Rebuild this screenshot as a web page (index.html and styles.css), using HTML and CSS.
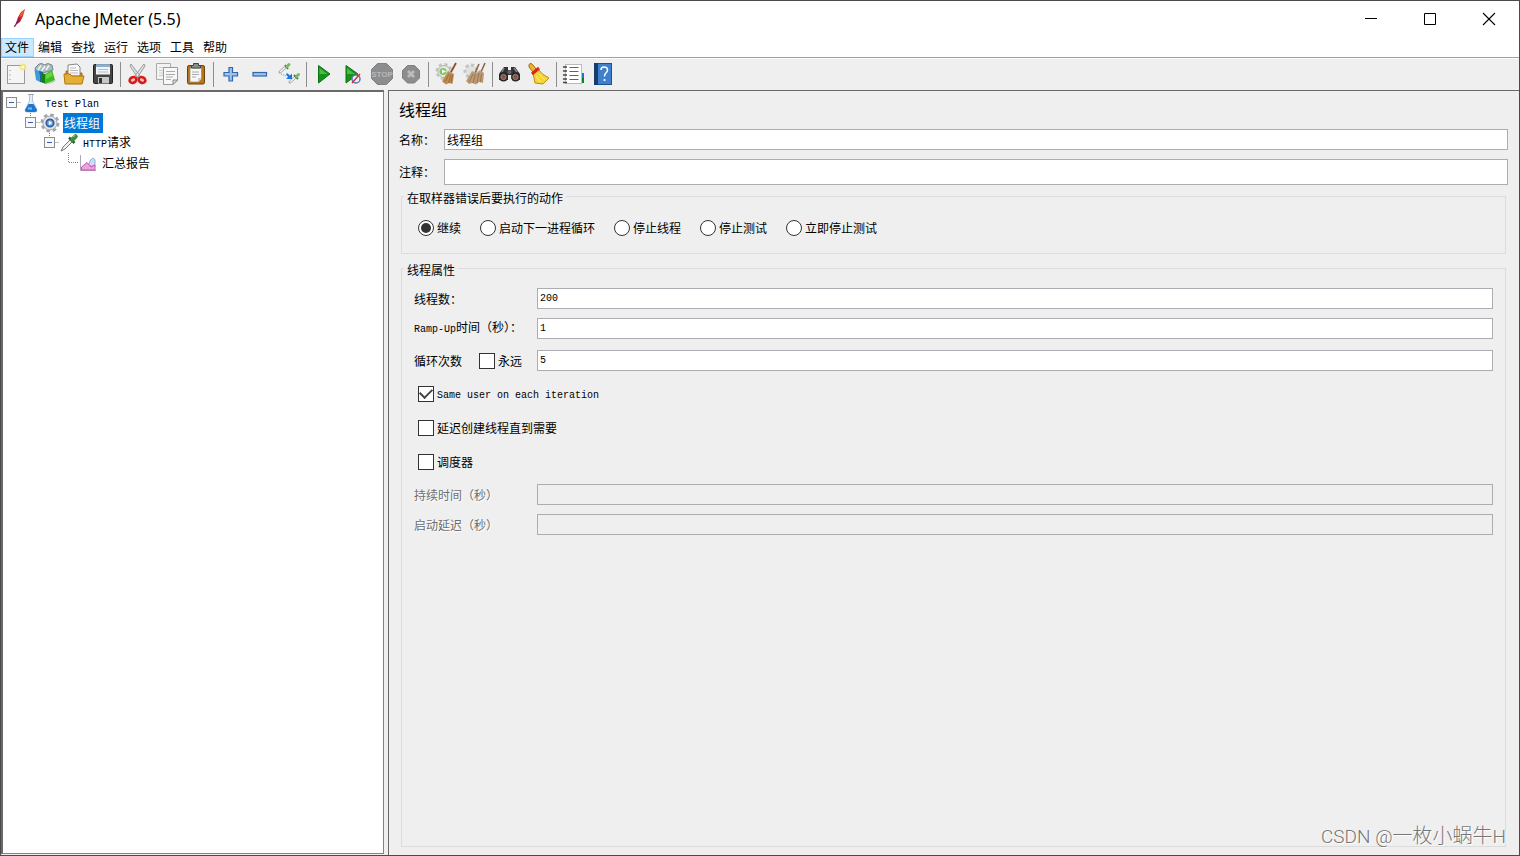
FILE: index.html
```html
<!DOCTYPE html>
<html lang="zh-CN">
<head>
<meta charset="utf-8">
<title>Apache JMeter (5.5)</title>
<link rel="stylesheet" href="styles.css">
</head>
<body>
<div class="window">
  <header class="titlebar">
    <svg class="app-icon" width="20" height="20" viewBox="0 0 20 20"><path d="M15 0 11 3 8 8 6 14 4 18 5 18 7 15 10 13 13 7Z" fill="#d2232a"/><path d="M15 0 12 3 9 8 12 7Z" fill="#f06a2a"/><path d="M9 9 6 14 7 15 10 12Z" fill="#8a2172"/><path d="M10 9 4 18" stroke="#5b2a6e" fill="none" stroke-width=".8"/></svg>
    <h1 class="title">Apache JMeter (5.5)</h1>
    <div class="window-buttons">
      <button aria-label="最小化"><svg width="14" height="14"><path d="M1 6.500H13" stroke="#000"/></svg></button>
      <button aria-label="最大化"><svg width="14" height="14"><path d="M1.500 1.500H12.500V12.500H1.500Z" stroke="#000" fill="none"/></svg></button>
      <button aria-label="关闭"><svg width="14" height="14"><path d="M1 1 13 13M13 1 1 13" stroke="#000" stroke-width="1.100"/></svg></button>
    </div>
  </header>
  <nav class="menubar">
    <button class="open">文件</button><button>编辑</button><button>查找</button><button>运行</button><button>选项</button><button>工具</button><button>帮助</button>
  </nav>
  <div class="toolbar" role="toolbar">
    <button aria-label="新建"><svg width="24" height="24" viewBox="0 0 24 24"><rect x="3.500" y="3.500" width="17" height="18" fill="#f5f5f5" stroke="#999" /><path d="M6 8v1M6 12.500v1M6 17v1" stroke="#aaa" stroke-width="1.500"/><circle cx="19" cy="5" r="3.500" fill="#f4e66a" opacity=".8"/><circle cx="19" cy="5" r="1.600" fill="#fffce0"/></svg></button>
    <button aria-label="模板"><svg width="24" height="24" viewBox="0 0 24 24"><path d="M2 6 6 2 9 1.500 11 3 15 1.500 19 3 20 8 10 11 3 9Z" fill="#aab9be" stroke="#75898f"/><path d="M5 8 8 3.500M8.500 9 12 4M13 8 16 3.500" fill="none" stroke="#eef3f4" stroke-width="1.600"/><path d="M1.500 7.500 6 9 7 20 3 18Z" fill="#3b9bd6"/><path d="M6 9 10 10 11 21 7 20Z" fill="#1768a5"/><path d="M18 20 23 18 21 20 13 23Z" fill="#bbb"/><path d="M12 12 19 8 22 18 12.500 22Z" fill="#3fba23"/><path d="M9 11 12 12 12.500 22 9 20Z" fill="#12820d"/><path d="M13 12.500 18.500 9.500 19.500 14 13 17Z" fill="#66d63f"/></svg></button>
    <button aria-label="打开"><svg width="24" height="24" viewBox="0 0 24 24"><path d="M4 20V9H8L10 11H20V20Z" fill="#c6881b" stroke="#a36a0a"/><path d="M6 14V3L15 2 18 5V14Z" fill="#fafafa" stroke="#888"/><path d="M8 6h6M8 8.500h8M8 11h8" stroke="#bbb"/><path d="M2 12H8L10 14H22L20 22H3Z" fill="#e5af35" stroke="#b27710"/></svg></button>
    <button aria-label="保存"><svg width="24" height="24" viewBox="0 0 24 24"><rect x="2.500" y="2.500" width="19" height="19" rx="1" fill="#454545" stroke="#222"/><rect x="5" y="2.500" width="14" height="10" fill="#f2f5f8"/><rect x="5" y="2.500" width="14" height="2.500" fill="#86b0d7"/><path d="M7 7.500h10M7 10h10" stroke="#bbb"/><rect x="7" y="15" width="11" height="6.500" fill="#c7c7c7"/><rect x="8" y="16" width="3" height="5" fill="#333"/></svg></button>
    <span class="separator"></span>
    <button aria-label="剪切"><svg width="24" height="24" viewBox="0 0 24 24"><path d="M5 2 4 4 12 16 15 15ZM18 2 19 4 11 16 8 15Z" fill="#e0e0e0" stroke="#888" stroke-width=".8"/><ellipse cx="7" cy="18" rx="3.500" ry="2.800" fill="#f3c8c8" stroke="#d81c1c" stroke-width="2.600" transform="rotate(-25 7 18)"/><ellipse cx="16" cy="18" rx="3.500" ry="2.800" fill="#f3c8c8" stroke="#d81c1c" stroke-width="2.600" transform="rotate(25 16 18)"/></svg></button>
    <button aria-label="复制"><svg width="24" height="24" viewBox="0 0 24 24"><path d="M1.500 1.500H15.500V17.500H1.500Z" fill="#f3f3f3" stroke="#aaa"/><path d="M4 5.500h8M4 8.500h5M4 11h4M4 13.500h4" stroke="#ccc"/><path d="M8.500 5.500H22.500V18L18 22.500H8.500Z" fill="#f8f8f8" stroke="#999"/><path d="M11 9.500h9M11 12.500h9M11 15h7M11 17.500h5" stroke="#aaa"/><path d="M22.500 18H18V22.500Z" fill="#ddd" stroke="#888"/></svg></button>
    <button aria-label="粘贴"><svg width="24" height="24" viewBox="0 0 24 24"><rect x="3.500" y="3.500" width="17" height="18.500" rx="1.500" fill="#b87518" stroke="#6e4307"/><path d="M6 6H17.500V17L14.500 20H6Z" fill="#f7f7f7" stroke="#888" stroke-width=".7"/><path d="M8 10h7M8 12.500h7M8 15h4" stroke="#aaa"/><path d="M17.500 16H14V20Z" fill="#ccc"/><path d="M7.500 6V3.500H9.500V1.500H14.500V3.500H16.500V6Z" fill="#888f86" stroke="#444"/></svg></button>
    <span class="separator"></span>
    <button aria-label="展开全部"><svg width="24" height="24" viewBox="0 0 24 24"><path d="M10 5.500h3.500v5h5v3.500h-5v5H10v-5H5v-3.500h5Z" fill="#9fc1e8" stroke="#3166a9" stroke-width="1.200"/></svg></button>
    <button aria-label="收起全部"><svg width="24" height="24" viewBox="0 0 24 24"><rect x="5" y="10.500" width="13.500" height="3.500" fill="#9fc1e8" stroke="#3166a9" stroke-width="1.200"/></svg></button>
    <button aria-label="切换"><svg width="24" height="24" viewBox="0 0 24 24"><path d="M3 10 8 5.500M13 20l5-4.500" stroke="#a3a9a3" stroke-width="3" stroke-linecap="round"/><path d="M3 10 8 5.500M13 20l5-4.500" stroke="#f4f4f4" stroke-width="1.400"/><path d="M8 3 11 7M17 13l4 4" stroke="#477a3d" stroke-width="1.800"/><path d="M10 4.500 12 2.500M19.500 14.500l2-2" stroke="#7fb573" stroke-width="3" stroke-linecap="round"/><path d="M4 12 9 14" stroke="#6a93d5" stroke-dasharray="1 1"/><path d="M10 11 13 13.500 15 11.500V17H9L11 15 9 12.500Z" fill="#1976e5"/></svg></button>
    <span class="separator"></span>
    <button aria-label="启动"><svg width="24" height="24" viewBox="0 0 24 24"><path d="M6.500 3.500 18 12 6.500 21Z" fill="#149318" stroke="#087411"/><path d="M7.500 6 15.500 12H7.500Z" fill="#4cba43"/></svg></button>
    <button aria-label="不停顿开始"><svg width="24" height="24" viewBox="0 0 24 24"><path d="M5 3.500 17 12 5 21Z" fill="#149318" stroke="#087411"/><path d="M6 6 14 12H6Z" fill="#4cba43"/><circle cx="15" cy="17" r="4" fill="#eef3fa" stroke="#5278b5" stroke-width="1.500"/><path d="M11 21 19 12" stroke="#e02520" stroke-width="1.400"/></svg></button>
    <button aria-label="停止" disabled><svg width="24" height="24" viewBox="0 0 24 24"><path d="M7.500 1.500H16.500L22.500 7.500V16.500L16.500 22.500H7.500L1.500 16.500V7.500Z" fill="#8d8d8d" stroke="#808080"/><text class="stop-text" x="12" y="15" text-anchor="middle">STOP</text></svg></button>
    <button aria-label="关闭测试" disabled><svg width="24" height="24" viewBox="0 0 24 24"><path d="M8.500 3.500H15.500L20.500 8.500V16L15.500 21H8.500L3.500 16V8.500Z" fill="#8d8d8d" stroke="#808080"/><path d="M9 9 15 15M15 9 9 15" stroke="#bcbcbc" stroke-width="2.800"/></svg></button>
    <span class="separator"></span>
    <button aria-label="清除"><svg width="24" height="24" viewBox="0 0 24 24"><circle cx="10" cy="9.500" r="7" fill="none" stroke="#c3c6c2" stroke-width="3" stroke-dasharray="3.200 2.300"/><circle cx="10" cy="9.500" r="6" fill="#e6e8e5" stroke="#b5b8b4"/><circle cx="9" cy="9.500" r="3.500" fill="#83c75c"/><path d="M8 7.500l4 2-4 2Z" fill="#fff"/><path d="M22 1 17 10" stroke="#8d5322" stroke-width="1.800"/><path d="M14 9 20 12 18.500 22 15 21 12 22.500 8 19.500Z" fill="#c08d55"/><path d="M15 12 11 20M17 13 14.500 21M18.500 13 17 21" stroke="#8f6232" stroke-width=".8"/></svg></button>
    <button aria-label="清除全部"><svg width="24" height="24" viewBox="0 0 24 24"><circle cx="8" cy="9" r="6" fill="#e2e3e1" stroke="#c3c6c2" stroke-width="3" stroke-dasharray="3.200 2.300"/><path d="M16 2 12 11M22 1 18 10" stroke="#87634a" stroke-width="1.500"/><path d="M9 9 14 11 17 8 21 11 20 21 16 20 13 22.500 9 21 6 22 3 19Z" fill="#bd9a74"/><path d="M10 12 6 20M12.500 12 10 21M16 11 14 21M18.500 12 17.500 20" stroke="#8c6c48" stroke-width=".8"/></svg></button>
    <span class="separator"></span>
    <button aria-label="搜索"><svg width="24" height="24" viewBox="0 0 24 24"><path d="M3 9 6 5H10V8H13V5H17L22 12V18H14V13H10V18H1V12Z" fill="#343434"/><path d="M6 6 4 10M16 6l3 4" stroke="#888" stroke-width="1.500"/><circle cx="5.500" cy="15" r="4.500" fill="#242424"/><circle cx="17.500" cy="15" r="4.500" fill="#242424"/><circle cx="5.500" cy="15" r="2.700" fill="#885342" stroke="#aaa" stroke-width=".6"/><circle cx="17.500" cy="15" r="2.700" fill="#885342" stroke="#aaa" stroke-width=".6"/><circle cx="11.500" cy="10" r="2" fill="#666"/></svg></button>
    <button aria-label="重置搜索"><svg width="24" height="24" viewBox="0 0 24 24"><path d="M2 2.500Q4 0 6 3L9 7 6 10 2 5Z" fill="#edb338" stroke="#a86a0c"/><path d="M6 11 11 7Q15 13 22 16L16 22 8 21Z" fill="#f4d33b" stroke="#bf8b12"/><path d="M9 14 13 20M12 12 18 18" stroke="#fff16e"/><path d="M5 12 12 6" stroke="#d82720" stroke-width="3"/></svg></button>
    <span class="separator"></span>
    <button aria-label="函数助手"><svg width="24" height="24" viewBox="0 0 24 24"><path d="M18 11h4v5h-4Z" fill="#1973de"/><path d="M18 16h4v5h-4Z" fill="#0b861a"/><rect x="3.500" y="2.500" width="16" height="19" fill="#fff" stroke="#bbb"/><path d="M7.500 5.500h9M7.500 9.500h9M7.500 13.500h9M7.500 17.500h9" stroke="#326bb3" stroke-width="1.200"/><path d="M1 5h4M1 9h4M1 13h4M1 17h4M1 20.500h4" stroke="#444" stroke-width="1.700"/></svg></button>
    <button aria-label="帮助"><svg width="24" height="24" viewBox="0 0 24 24"><rect x="3.500" y="1.500" width="17" height="21" fill="#3f80cc" stroke="#1c4f94"/><rect x="3" y="1" width="4" height="22" fill="#173c70"/><path d="M10 8q0-3 3-3 3.500 0 3.500 3 0 2-2 3.500-1 1-1 3" fill="none" stroke="#fff" stroke-width="1.500"/><circle cx="13.500" cy="18" r="1.100" fill="#fff"/></svg></button>
  </div>
  <div class="workspace">
    <aside class="tree">
      <ul>
        <li>
          <div class="node"><button class="toggle" aria-label="收起"><svg width="15" height="20"><path d="M11.500 9.500H15" class="dots"/><rect x=".5" y="4.500" width="10" height="10" class="box"/><path d="M3 9.500h5" class="minus"/></svg></button><svg width="20" height="20" viewBox="0 0 20 20"><path d="M8.500 1.500V8L4 17Q4 19 6 19H14Q16 19 16 17L11.500 8V1.500Z" fill="#e4edf5" stroke="#b4c2cf"/><path d="M7.500 11H12.500L16 17Q16 19 14 19H6Q4 19 4 17Z" fill="#1977d2"/><path d="M7 1.500h6" stroke="#9ab"/><path d="M7 15.500h4" stroke="#77b9f2" stroke-width="2"/></svg><span class="label"><span class="en">Test Plan</span></span></div>
          <ul>
            <li>
              <div class="node"><button class="toggle" aria-label="收起"><svg width="15" height="20"><path d="M5.500 0V4M11.500 9.500H15" class="dots"/><rect x=".5" y="4.500" width="10" height="10" class="box"/><path d="M3 9.500h5" class="minus"/></svg></button><svg width="20" height="20" viewBox="0 0 20 20"><circle cx="10" cy="10" r="8" fill="none" stroke="#a3a5aa" stroke-width="3" stroke-dasharray="3.500 2.780"/><circle cx="10" cy="10" r="7" fill="#e4e6ea" stroke="#a3a5aa"/><circle cx="10" cy="10" r="3.700" fill="#7fb2e2" stroke="#315e9d" stroke-width="1.800"/><path d="M9 8l3 2-3 2Z" fill="#fff"/></svg><span class="label selected">线程组</span></div>
              <ul>
                <li>
                  <div class="node"><button class="toggle" aria-label="收起"><svg width="15" height="20"><path d="M5.500 0V4M11.500 9.500H15" class="dots"/><rect x=".5" y="4.500" width="10" height="10" class="box"/><path d="M3 9.500h5" class="minus"/></svg></button><svg width="20" height="20" viewBox="0 0 20 20"><path d="M2 18 4 14 12 6 14 8 6 16Z" fill="#eef1ee" stroke="#777"/><path d="M10 4.500 15.500 10" stroke="#305a2c" stroke-width="2.500"/><path d="M13.500 6.500 16.500 3.500" stroke="#3e8e38" stroke-width="4.500" stroke-linecap="round"/><path d="M14 4 16 2" stroke="#83bd77" stroke-width="1.500"/></svg><span class="label"><span class="en">HTTP</span>请求</span></div>
                  <ul>
                    <li><div class="node"><svg class="toggle" width="15" height="20"><path d="M5.500 0V9.500H15" class="dots"/></svg><svg width="20" height="20" viewBox="0 0 20 20"><path d="M2.500 2V17.500H18" stroke="#aab" fill="none"/><path d="M10 13 12 8Q15 3 17 7V13Z" fill="#cbddf6" stroke="#8fabdc"/><path d="M3.500 17V14L9 9.500 13 14 17 12V17Z" fill="#eba3da" stroke="#cb50b5"/></svg><span class="label">汇总报告</span></div></li>
                  </ul>
                </li>
              </ul>
            </li>
          </ul>
        </li>
      </ul>
    </aside>
    <main class="editor">
      <h2>线程组</h2>
      <div class="field name"><label for="name">名称：</label><input id="name" type="text" value="线程组"></div>
      <div class="field comment"><label for="comment">注释：</label><input id="comment" type="text"></div>
      <fieldset class="actions">
        <legend>在取样器错误后要执行的动作</legend>
        <div class="radios">
          <label><input type="radio" name="action" checked>继续</label>
          <label><input type="radio" name="action">启动下一进程循环</label>
          <label><input type="radio" name="action">停止线程</label>
          <label><input type="radio" name="action">停止测试</label>
          <label><input type="radio" name="action">立即停止测试</label>
        </div>
      </fieldset>
      <fieldset class="properties">
        <legend>线程属性</legend>
        <div class="pair"><label for="threads">线程数：</label><input id="threads" class="en" type="text" value="200"></div>
        <div class="pair"><label for="ramp"><span class="en">Ramp-Up</span>时间（秒）：</label><input id="ramp" class="en" type="text" value="1"></div>
        <div class="pair loops"><div class="loop-label"><label for="loops">循环次数</label><label class="check"><input type="checkbox">永远</label></div><input id="loops" class="en" type="text" value="5"></div>
        <div class="checks">
          <label class="check"><input type="checkbox" checked><span><span class="en">Same user on each iteration</span></span></label>
          <label class="check"><input type="checkbox">延迟创建线程直到需要</label>
          <label class="check"><input type="checkbox">调度器</label>
        </div>
        <div class="pair disabled"><label for="duration">持续时间（秒）</label><input id="duration" type="text" disabled></div>
        <div class="pair disabled"><label for="delay">启动延迟（秒）</label><input id="delay" type="text" disabled></div>
      </fieldset>
    </main>
  </div>
  <div class="watermark">CSDN @<span class="cjk">一枚小蜗牛</span>H</div>
</div>
</body>
</html>
```
FILE: styles.css
```css
* { box-sizing: border-box; }
body {
  margin: 0;
  font: 12px/16px "Noto Sans CJK SC", sans-serif;
  color: #000;
}
button, input { font: inherit; color: inherit; }
button { border: 0; padding: 0; background: none; }
svg { display: block; flex: none; }
ul { list-style: none; margin: 0; padding: 0; }

.window {
  position: relative;
  display: flex;
  flex-direction: column;
  height: 100vh;
  border: 1px solid #4a4a4e;
  background: #efefef;
}
.titlebar {
  display: flex;
  align-items: center;
  height: 37px;
  padding: 0 1px 1px 9px;
  background: #fff;
}
.title {
  flex: 1;
  margin: 0 0 0 5px;
  font: 16px/20px "Noto Sans", sans-serif;
}
.window-buttons { display: flex; }
.window-buttons button {
  display: grid;
  place-items: center;
  width: 59px;
  height: 36px;
}
.menubar {
  display: flex;
  height: 20px;
  background: #fff;
  border-bottom: 1px solid #a0a0a0;
}
.menubar button {
  width: 33px;
  height: 19px;
  padding: 0 1px 2px 0;
}
.menubar .open { background: #cce8ff; box-shadow: inset 0 0 0 1px #99d1ff; }

.toolbar {
  display: flex;
  align-items: flex-start;
  height: 32px;
  border-top: 1px solid #fff;
}
.toolbar button {
  display: grid;
  place-items: center;
  width: 29px;
  height: 30px;
}
.separator {
  width: 1px;
  height: 25px;
  margin: 3px 2px 0 3px;
  background: #8d8d8d;
}
.stop-text { font: bold 8px "Liberation Sans", sans-serif; fill: #b8b8b8; }

.workspace { flex: 1; display: flex; gap: 4px; min-height: 0; }
.tree {
  flex: none;
  width: 383px;
  margin-bottom: 1px;
  padding: 1px 0 0 3px;
  background: #fff;
  border: 1px solid #828282;
  border-top: 2px solid #696969;
  border-left: 2px solid #696969;
}
.tree ul ul { margin-left: 19px; }
.node { display: flex; align-items: center; height: 20px; }
.node .label { margin-left: 3px; padding: 0 3px 0 1px; line-height: 20px; }
.node .selected { background: #0078d7; color: #fff; }
.dots { fill: none; stroke: #808080; stroke-dasharray: 1 1; }
.box { fill: #f8f8f8; stroke: #8c8c8c; }
.minus { stroke: #3b5aa9; }
.en { font-family: "Liberation Mono", monospace; font-size: 10px; }

.editor {
  flex: 1;
  display: flex;
  flex-direction: column;
  padding: 8px 13px 8px 10px;
  border-top: 1px solid #696969;
  border-left: 1px solid #696969;
}
.editor h2 { margin: 0 0 1px; font-size: 16px; line-height: 20px; font-weight: 400; }
.editor input[type="text"] {
  flex: 1;
  min-width: 0;
  height: 21px;
  padding: 0 2px;
  border: 1px solid #abadb3;
  border-radius: 0;
  background: #fff;
}
.field { display: flex; align-items: center; margin: 9px -2px 0 0; }
.field label { width: 45px; }
.editor .comment input { height: 26px; }

fieldset {
  min-width: 0;
  margin: 2px 0 0 2px;
  border: 1px solid #dcdcdc;
}
legend { padding: 4px 3px 0; line-height: 14px; }
.actions { padding: 15px 16px 17px 2px; }
.radios { display: flex; gap: 19px; padding-left: 14px; }
.radios label, .check { display: flex; align-items: center; gap: 3px; }
input[type="radio"], input[type="checkbox"] {
  appearance: none;
  display: grid;
  place-items: center;
  flex: none;
  width: 16px;
  height: 16px;
  margin: 0;
  border: 1px solid #333;
  background: #fff;
}
input[type="radio"] { border-radius: 50%; }
input[type="radio"]:checked::before {
  content: "";
  width: 10px;
  height: 10px;
  border-radius: 50%;
  background: #333;
}
input[type="checkbox"]:checked::before {
  content: "";
  width: 10px;
  height: 6px;
  margin-bottom: 4px;
  border: solid #444;
  border-width: 0 0 2px 2px;
  transform: rotate(-45deg);
}
.properties { flex: 1; margin-top: 5px; padding: 11px 12px 0 2px; }
.pair {
  display: grid;
  grid-template-columns: 123px 1fr;
  align-items: center;
  margin-bottom: 9px;
  padding-left: 10px;
}
.pair.loops { margin-top: 11px; margin-bottom: 15px; }
.loop-label { display: flex; gap: 17px; }
.checks {
  display: grid;
  grid-auto-rows: 16px;
  justify-items: start;
  gap: 18px;
  padding: 0 0 14px 14px;
}
.disabled label { color: #6d6d6d; text-shadow: 1px 1px #fff; }
.editor .disabled input { background: #efefef; }

.watermark {
  position: absolute;
  right: 13px;
  bottom: 5px;
  font: 300 19px/26px Roboto, sans-serif;
  color: #777;
  text-shadow: 1px 1px #fff;
}
.cjk { font: 300 20px/26px "Noto Sans CJK SC", sans-serif; }
```
